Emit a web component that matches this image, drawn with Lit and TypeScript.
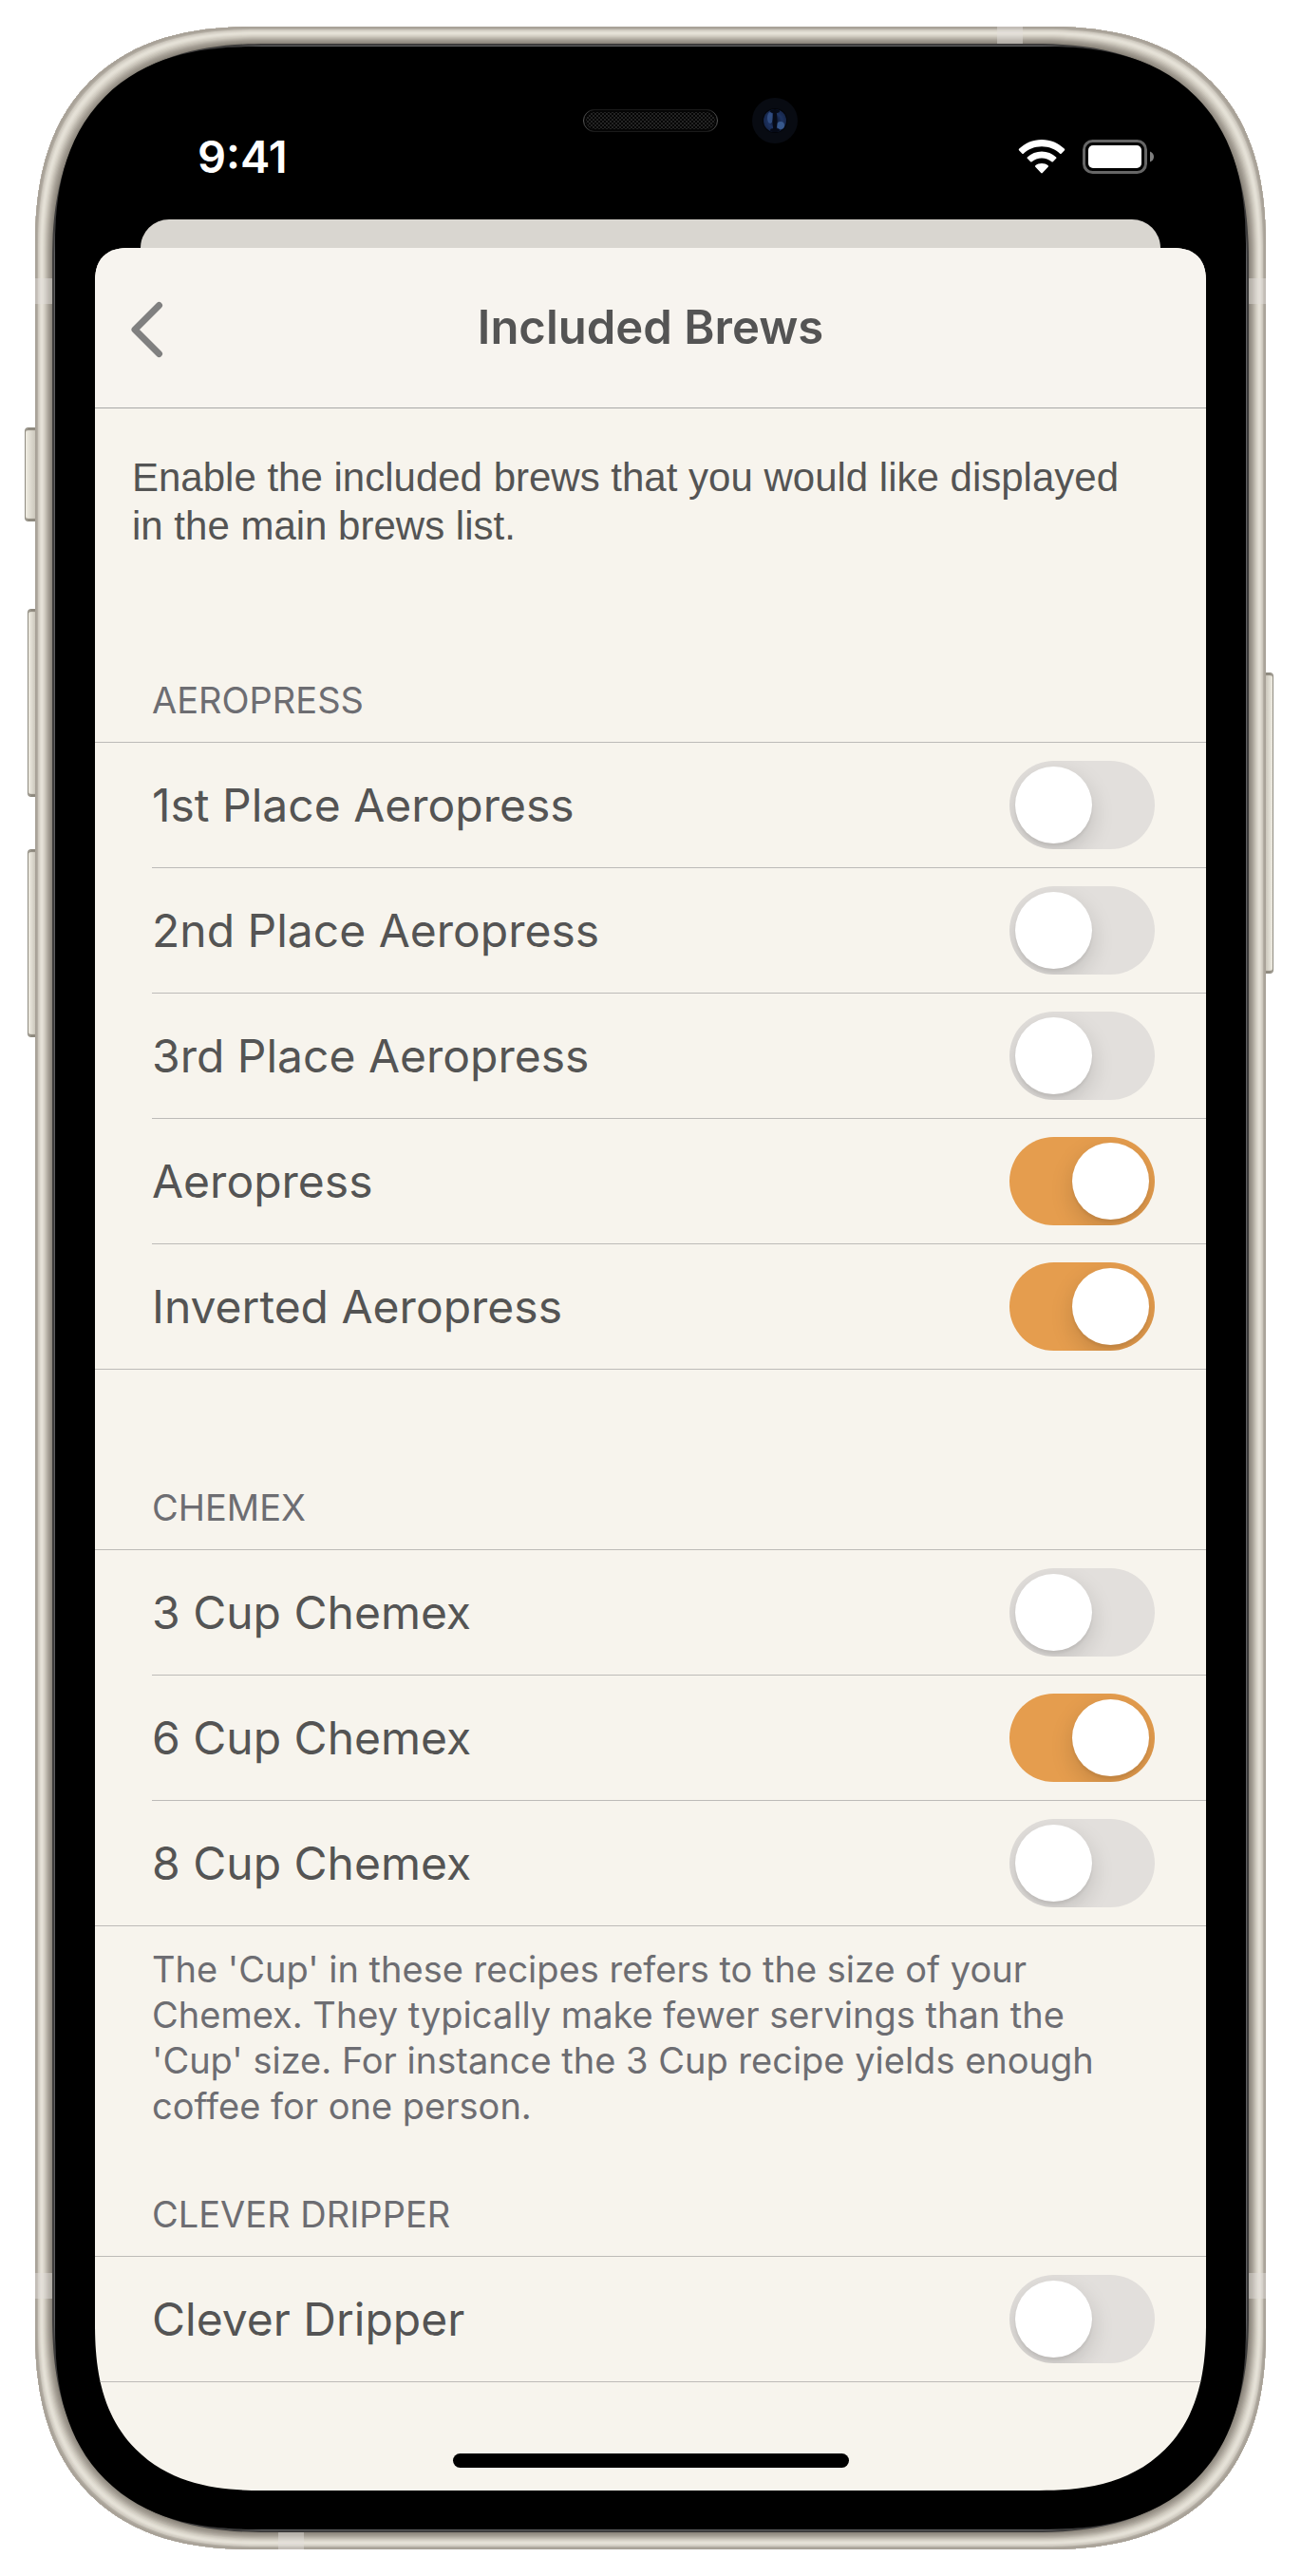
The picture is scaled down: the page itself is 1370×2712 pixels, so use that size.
import { LitElement, html, svg, css, nothing } from "lit";
import { customElement, property, state } from "lit/decorators.js";

interface Brew {
  name: string;
  enabled: boolean;
}

interface Section {
  title: string;
  brews: Brew[];
  note?: string;
}

const SECTIONS: Section[] = [
  {
    title: "AEROPRESS",
    brews: [
      { name: "1st Place Aeropress", enabled: false },
      { name: "2nd Place Aeropress", enabled: false },
      { name: "3rd Place Aeropress", enabled: false },
      { name: "Aeropress", enabled: true },
      { name: "Inverted Aeropress", enabled: true },
    ],
  },
  {
    title: "CHEMEX",
    brews: [
      { name: "3 Cup Chemex", enabled: false },
      { name: "6 Cup Chemex", enabled: true },
      { name: "8 Cup Chemex", enabled: false },
    ],
    note: "The 'Cup' in these recipes refers to the size of your Chemex. They typically make fewer servings than the 'Cup' size. For instance the 3 Cup recipe yields enough coffee for one person.",
  },
  {
    title: "CLEVER DRIPPER",
    brews: [{ name: "Clever Dripper", enabled: false }],
  },
];

@customElement("phone-frame")
export class PhoneFrame extends LitElement {
  static styles = css`
    :host {
      display: block;
    }
    .phone {
      position: relative;
      padding: 21px;
      border-radius: 200px;
      background: #4d4d4e;
      box-shadow:
        inset 0 0 0 1px #a8a197,
        inset 0 0 0 2px #aaa49a,
        inset 0 0 0 3px #b4aea4,
        inset 0 0 0 4px #cdc8be,
        inset 0 0 0 5px #d6d1c7,
        inset 0 0 0 6px #dfdbd1,
        inset 0 0 0 7px #e5e1d7,
        inset 0 0 0 8px #e4e0d6,
        inset 0 0 0 9px #dedacf,
        inset 0 0 0 10px #d6d1c7,
        inset 0 0 0 11px #cdc8bd,
        inset 0 0 0 12px #c2bdb2,
        inset 0 0 0 13px #b8b2a8,
        inset 0 0 0 14px #ada79d,
        inset 0 0 0 15px #a39d93,
        inset 0 0 0 16px #9b958b,
        inset 0 0 0 17px #938d83,
        inset 0 0 0 18px #8b857b,
        inset 0 0 0 20px #3c3b3b,
        inset 0 0 0 21px #616264;
    }
    .bezel {
      position: relative;
      padding: 41px 42px;
      border-radius: 180px;
      background: #000;
    }
    @supports (corner-shape: superellipse(1.3)) {
      .phone {
        border-radius: 233px;
        corner-shape: superellipse(1.28);
      }
      .bezel {
        border-radius: 212px;
        corner-shape: superellipse(1.28);
      }
    }
    .band {
      position: absolute;
      background: rgba(226, 222, 220, 0.45);
    }
    .band.side {
      width: 18px;
      height: 27px;
    }
    .band.edge {
      width: 27px;
      height: 18px;
    }
    .left {
      left: 0;
    }
    .right {
      right: 0;
    }
    .high {
      top: 265px;
    }
    .low {
      bottom: 264px;
    }
    .band.top {
      top: 0;
      right: 256px;
    }
    .band.bottom {
      bottom: 0;
      left: 256px;
    }
    .key {
      position: absolute;
      box-sizing: border-box;
      width: 8px;
      border: 1px solid #8f8b80;
      background: linear-gradient(to right, #f0ede3, #ccc8bd);
      box-shadow:
        inset 0 3px 1px -1px #8d887d,
        inset 0 -3px 1px -1px #8d887d;
    }
    .key.start {
      right: 100%;
      border-right: 0;
      border-radius: 4px 0 0 4px;
    }
    .key.end {
      left: 100%;
      border-left: 0;
      border-radius: 0 4px 4px 0;
      background: linear-gradient(to left, #f0ede3, #ccc8bd);
    }
    .key.mute {
      top: 422px;
      width: 11px;
      height: 99px;
    }
    .key.volume-up {
      top: 613px;
      height: 198px;
    }
    .key.volume-down {
      top: 866px;
      height: 198px;
    }
    .key.power {
      top: 680px;
      height: 317px;
    }
    .sensors {
      position: absolute;
      top: 54px;
      left: 50%;
      width: 228px;
      height: 48px;
      margin-left: -71px;
    }
  `;

  render() {
    return html`
      <div class="phone">
        <span class="key start mute"></span>
        <span class="key start volume-up"></span>
        <span class="key start volume-down"></span>
        <span class="key end power"></span>
        <span class="band side left high"></span>
        <span class="band side right high"></span>
        <span class="band side left low"></span>
        <span class="band side right low"></span>
        <span class="band edge top"></span>
        <span class="band edge bottom"></span>
        <div class="bezel">
          <svg class="sensors" viewBox="0 0 228 48" aria-hidden="true">
            <defs>
              <pattern id="mesh" width="4" height="4" patternUnits="userSpaceOnUse">
                <rect width="4" height="4" fill="#050505" />
                <rect width="2" height="2" fill="#242424" />
                <rect x="2" y="2" width="2" height="2" fill="#242424" />
              </pattern>
              <linearGradient id="rim" x1="0" x2="1">
                <stop offset="0" stop-color="#555" />
                <stop offset="0.08" stop-color="#1a1a1a" />
                <stop offset="0.92" stop-color="#1a1a1a" />
                <stop offset="1" stop-color="#555" />
              </linearGradient>
              <radialGradient id="iris">
                <stop offset="0" stop-color="#0c1428" />
                <stop offset="0.6" stop-color="#1d3260" />
                <stop offset="1" stop-color="#16264a" />
              </radialGradient>
            </defs>
            <rect x="0.5" y="12.5" width="141" height="23" rx="11.5" fill="#050505" stroke="url(#rim)" />
            <rect x="3" y="15" width="136" height="18" rx="9" fill="url(#mesh)" />
            <circle cx="202" cy="24" r="24" fill="#080b12" />
            <circle cx="202" cy="24" r="13" fill="#03050a" />
            <circle cx="202" cy="24" r="12" fill="url(#iris)" />
            <ellipse cx="197" cy="21" rx="3" ry="6" fill="#3a5a92" opacity="0.7" />
            <circle cx="208" cy="29" r="4" fill="#3f6398" opacity="0.8" />
            <ellipse cx="202" cy="24" rx="2.5" ry="12" fill="#060a16" />
            <ellipse cx="202" cy="14" rx="5" ry="2" fill="#060a16" />
            <ellipse cx="202" cy="34" rx="5" ry="2" fill="#060a16" />
          </svg>
          <slot></slot>
        </div>
      </div>
    `;
  }
}

@customElement("status-bar")
export class StatusBar extends LitElement {
  static styles = css`
    :host {
      display: block;
    }
    .bar {
      display: flex;
      align-items: center;
      justify-content: space-between;
      box-sizing: border-box;
      height: 141px;
      padding: 8px 54px 0 108px;
      color: #fff;
      font: 600 47px/56px Inter, "Liberation Sans", sans-serif;
    }
    .icons {
      display: flex;
      align-items: center;
      gap: 18px;
    }
    .icon {
      display: block;
    }
  `;

  render() {
    return html`
      <div class="bar">
        <time>9:41</time>
        <div class="icons">
          <svg class="icon" width="50" height="38" viewBox="0 0 50 38" role="img" aria-label="Wi-Fi">
            <path
              fill="#fff"
              d="M25 1C34.3 1 42.8 4.700 49 10.800Q49.600 11.500 49 12.200L45.600 15.700Q44.900 16.300 44.200 15.700C39.200 10.900 32.400 8.200 25 8.200S10.800 10.900 5.800 15.700Q5.100 16.300 4.400 15.700L1 12.200Q0.400 11.500 1 10.800C7.200 4.700 15.700 1 25 1Z
              M25 13.500C30.800 13.500 36.100 15.700 40.200 19.400Q40.900 20.100 40.200 20.800L36.800 24.300Q36.100 24.900 35.400 24.300C32.600 21.900 29 20.500 25 20.500S17.400 21.900 14.600 24.300Q13.900 24.900 13.200 24.300L9.800 20.800Q9.100 20.100 9.800 19.400C13.900 15.700 19.200 13.500 25 13.500Z
              M25 26C27.700 26 29.900 26.900 31.700 28.300Q32.400 29 31.700 29.700L25.800 36.100Q25 36.900 24.200 36.100L18.300 29.700Q17.600 29 18.300 28.300C20.100 26.900 22.300 26 25 26Z"
            />
          </svg>
          <svg class="icon" width="76" height="36" viewBox="0 0 76 36" role="img" aria-label="Battery full">
            <rect x="1.500" y="1.500" width="65" height="33" rx="9" fill="none" stroke="#666" stroke-width="3" />
            <rect x="6" y="6" width="56" height="24" rx="5" fill="#fff" />
            <path d="M71 12.500Q75 14 75 18T71 23.500Z" fill="#808080" />
          </svg>
        </div>
      </div>
    `;
  }
}

@customElement("brew-section")
export class BrewSection extends LitElement {
  @property({ attribute: false }) section!: Section;

  static styles = css`
    :host {
      display: block;
      font-family: Inter, "Liberation Sans", sans-serif;
    }
    .title {
      margin: 0;
      padding: 0 60px 20px;
      color: #6d6d72;
      font-size: 38px;
      font-weight: 400;
      line-height: 48px;
    }
    .list {
      margin: 0;
      padding: 0;
      list-style: none;
      border-top: 1px solid #bdbbb8;
      border-bottom: 1px solid #bdbbb8;
    }
    .row {
      display: flex;
      align-items: center;
      justify-content: space-between;
      box-sizing: border-box;
      min-height: 131px;
      margin-left: 60px;
      padding-right: 54px;
    }
    .row + .row {
      min-height: 132px;
      border-top: 1px solid #bdbbb8;
    }
    .label {
      flex: 1;
      color: #545454;
      font-size: 48px;
      line-height: 60px;
    }
    .switch {
      position: relative;
      flex: none;
      width: 153px;
      height: 93px;
      margin: 0;
      border-radius: 47px;
      overflow: hidden;
      appearance: none;
      background: #e2dfdc;
      cursor: pointer;
    }
    .switch::before {
      content: "";
      position: absolute;
      top: 6px;
      left: 6px;
      width: 81px;
      height: 81px;
      border-radius: 50%;
      background: #fff;
      box-shadow: 0 9px 24px rgba(0, 0, 0, 0.15), 0 3px 3px rgba(0, 0, 0, 0.06);
    }
    .switch:checked {
      background: #e59d4e;
    }
    .switch:checked::before {
      left: 66px;
    }
    .note {
      margin: 0;
      padding: 21px 60px 0;
      color: #6d6d72;
      font-size: 38px;
      line-height: 48px;
    }
  `;

  private toggle(brew: Brew, event: Event) {
    brew.enabled = (event.target as HTMLInputElement).checked;
    this.requestUpdate();
  }

  render() {
    const { title, brews, note } = this.section;
    return html`
      <h2 class="title">${title}</h2>
      <ul class="list">
        ${brews.map(
          (brew, i) => html`
            <li class="row">
              <label class="label" for="brew-${i}">${brew.name}</label>
              <input
                class="switch"
                id="brew-${i}"
                type="checkbox"
                role="switch"
                .checked=${brew.enabled}
                @change=${(e: Event) => this.toggle(brew, e)}
              />
            </li>
          `,
        )}
      </ul>
      ${note ? html`<p class="note">${note}</p>` : nothing}
    `;
  }
}

@customElement("app-root")
export class AppRoot extends LitElement {
  @state() private sections = SECTIONS;

  static styles = css`
    :host {
      display: block;
      padding: 28px 37px;
      background: #fff;
    }
    .underlay {
      height: 30px;
      margin: 0 48px;
      border-radius: 32px 32px 0 0;
      background: #d9d6d0;
    }
    .sheet {
      display: flex;
      flex-direction: column;
      overflow: hidden;
      border-radius: 34px 34px 150px 150px;
      background: #f7f4ed;
    }
    @supports (corner-shape: superellipse(1.3)) {
      .sheet {
        border-radius: 36px 36px 176px 176px;
        corner-shape: superellipse(1.3);
      }
    }
    .header {
      display: grid;
      grid-template-columns: 110px 1fr 110px;
      align-items: center;
      height: 168px;
      border-bottom: 1px solid #a9a8a6;
      background: #f7f4ef;
    }
    .back {
      display: flex;
      align-items: center;
      height: 100px;
      margin: 4px 0 0;
      padding: 0 0 0 36px;
      border: 0;
      background: none;
      cursor: pointer;
    }
    .heading {
      margin: 0;
      color: #545454;
      font: 600 49px/60px Inter, "Liberation Sans", sans-serif;
      text-align: center;
    }
    .intro {
      margin: 0;
      padding: 47px 60px 0 39px;
      color: #545454;
      font: 42px/51px "Liberation Sans", Arial, sans-serif;
    }
    .sections {
      display: flex;
      flex-direction: column;
    }
    .group {
      padding-top: 121px;
    }
    .group:first-child {
      padding-top: 134px;
    }
    .group.after-note {
      padding-top: 66px;
    }
    .home {
      display: flex;
      justify-content: center;
      padding: 75px 0 24px;
    }
    .indicator {
      width: 417px;
      height: 15px;
      border-radius: 8px;
      background: #000;
    }
  `;

  render() {
    return html`
      <phone-frame>
        <status-bar></status-bar>
        <div class="underlay"></div>
        <main class="sheet">
          <header class="header">
            <button class="back" type="button" aria-label="Back">
              <svg width="38" height="62" viewBox="0 0 38 62" aria-hidden="true">
                ${svg`<path d="M31.500 5.500L6 31L31.500 56.500" fill="none" stroke="#808080" stroke-width="7" stroke-linecap="round" stroke-linejoin="round" />`}
              </svg>
            </button>
            <h1 class="heading">Included Brews</h1>
          </header>
          <p class="intro">
            Enable the included brews that you would like displayed in the main brews list.
          </p>
          <div class="sections">
            ${this.sections.map(
              (section, i) => html`
                <brew-section
                  class="group ${this.sections[i - 1]?.note ? "after-note" : ""}"
                  .section=${section}
                ></brew-section>
              `,
            )}
          </div>
          <div class="home"><span class="indicator"></span></div>
        </main>
      </phone-frame>
    `;
  }
}
